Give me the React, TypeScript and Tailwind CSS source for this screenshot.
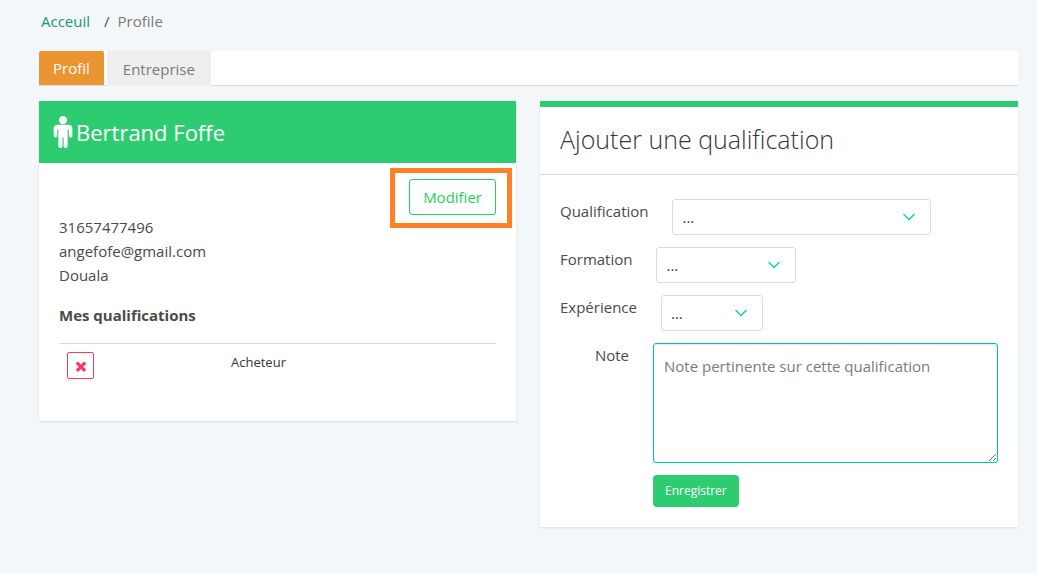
import React, { useState } from 'react';

interface SelectFieldProps {
  id: string;
  label: string;
  width: string;
}

const profile = {
  name: 'Bertrand Foffe',
  phone: '31657477496',
  email: 'angefofe@gmail.com',
  city: 'Douala',
  qualifications: ['Acheteur'],
};

const MaleIcon = () => (
  <svg className="h-8 w-5" viewBox="0 160 1024 1760" fill="currentColor" aria-hidden="true">
    <path d="M1024 832v416q0 40-28 68t-68 28-68-28-28-68v-352h-64v912q0 46-33 79t-79 33-79-33-33-79v-464h-64v464q0 46-33 79t-79 33-79-33-33-79v-912h-64v352q0 40-28 68t-68 28-68-28-28-68v-416q0-80 56-136t136-56h640q80 0 136 56t56 136zm-288-448q0 93-65.5 158.5t-158.5 65.5-158.5-65.5-65.5-158.5 65.5-158.5 158.5-65.5 158.5 65.5 65.5 158.5z" />
  </svg>
);

const CrossIcon = () => (
  <svg className="h-[10px] w-[10px]" viewBox="302 430 1188 1124" fill="currentColor" aria-hidden="true">
    <path d="M1490 1322q0 40-28 68l-136 136q-28 28-68 28t-68-28l-294-294-294 294q-28 28-68 28t-68-28l-136-136q-28-28-28-68t28-68l294-294-294-294q-28-28-28-68t28-68l136-136q28-28 68-28t68 28l294 294 294-294q28-28 68-28t68 28l136 136q28 28 28 68t-28 68l-294 294 294 294q28 28 28 68z" />
  </svg>
);

const SelectField: React.FC<SelectFieldProps> = ({ id, label, width }) => (
  <div className="flex">
    <label htmlFor={id} className="mr-6 flex-1 text-right">{label}</label>
    <div className="flex flex-[5]">
      <div className={`relative ${width}`}>
        <select
          id={id}
          className="block h-9 w-full appearance-none rounded-[3px] border border-[#dbdbdb] bg-white px-[9px] text-[#363636] focus:border-[#00d1b2] focus:outline-none"
        >
          <option>...</option>
        </select>
        <svg
          className="pointer-events-none absolute top-[14px] right-4 h-2 w-3"
          viewBox="0 0 12 8"
          fill="none"
          stroke="#00d1b2"
          strokeWidth="1.3"
        >
          <path d="M0.5 1L6 6.5L11.5 1" />
        </svg>
      </div>
    </div>
  </div>
);

const App: React.FC = () => {
  const [note, setNote] = useState('');

  return (
    <div className="min-h-screen bg-[#f4f7fa] pr-[19px] pb-10 pl-[39px] font-['Open_Sans','Noto_Sans',sans-serif] text-[15px] leading-6 text-[#4a4a4a]">
      <nav className="flex pt-[9px] pb-[18px]">
        <a href="#" className="pl-[2px] text-[#16967a]">Acceuil</a>
        <span className="mr-2 ml-[14px]">/</span>
        <span className="text-[#7a7a7a]">Profile</span>
      </nav>

      <div className="flex h-[35px] gap-[3px] border-b border-[#dbdbdb] bg-white">
        <button type="button" className="h-[34px] rounded-t-[2px] bg-[#eb9532] px-[14px] text-white">Profil</button>
        <button type="button" className="h-[35px] rounded-t-[2px] bg-[#eeeeee] px-4 text-[#7a7a7a]">Entreprise</button>
      </div>

      <div className="mt-[15px] grid grid-cols-[477fr_478fr] items-start gap-6">
        <section className="bg-white shadow-[0_1px_2px_rgba(10,10,10,0.1)]">
          <header className="flex h-[62px] items-center bg-[#2ecc71] px-[14px] text-white">
            <MaleIcon />
            <h1 className="ml-[3px] text-[22px]">{profile.name}</h1>
          </header>
          <div className="px-5 pt-4 pb-[38px]">
            <div className="relative ml-auto w-fit">
              <button type="button" className="block h-9 rounded-[3px] border border-[#23d160] px-[13px] text-[#23d160]">Modifier</button>
              <div className="pointer-events-none absolute -top-[11px] -right-4 -bottom-[13px] -left-[19px] border-5 border-[#ff8127]" />
            </div>
            <p>{profile.phone}</p>
            <p>{profile.email}</p>
            <p>{profile.city}</p>
            <h2 className="mt-4 font-bold">Mes qualifications</h2>
            <table className="mt-4 w-full table-fixed border-t border-[#dbdbdb] text-[13px] text-[#363636]">
              <tbody>
                {profile.qualifications.map(q => (
                  <tr key={q}>
                    <td className="w-[164px] px-2 pt-2 pb-1 align-top">
                      <button
                        type="button"
                        aria-label="Supprimer"
                        className="flex h-[27px] w-[27px] items-center justify-center rounded-[2px] border border-[#ff3860] pt-[2px] text-[#ff3860]"
                      >
                        <CrossIcon />
                      </button>
                    </td>
                    <td className="px-2 pt-2 align-top leading-5">{q}</td>
                  </tr>
                ))}
              </tbody>
            </table>
          </div>
        </section>

        <section className="border-t-6 border-[#2ecc71] bg-white shadow-[0_1px_2px_rgba(10,10,10,0.1)]">
          <header className="border-b border-[#d0dce7] px-5 pt-3 pb-[15px]">
            <h2 className="text-[25px] leading-10 font-light text-[#363636]">Ajouter une qualification</h2>
          </header>
          <form className="flex flex-col gap-3 px-5 pt-6 pb-5" onSubmit={e => e.preventDefault()}>
            <SelectField id="qualification" label="Qualification" width="w-[259px]" />
            <SelectField id="formation" label="Formation" width="w-[140px]" />
            <SelectField id="experience" label="Expérience" width="w-[102px]" />
            <div className="flex">
              <label htmlFor="note" className="mr-6 flex-1 text-right">Note</label>
              <div className="flex-[5]">
                <textarea
                  id="note"
                  value={note}
                  onChange={e => setNote(e.target.value)}
                  placeholder="Note pertinente sur cette qualification"
                  className="block h-[120px] w-full rounded-[3px] border border-[#00c4a7] px-[10px] py-[10px] shadow-[inset_0_1px_2px_rgba(10,10,10,0.1)] placeholder:text-[#7b7b7b] focus:outline-none"
                />
                <button type="submit" className="mt-3 block h-8 rounded-[4px] bg-[#2ecc71] px-3 text-[12px] text-white">Enregistrer</button>
              </div>
            </div>
          </form>
        </section>
      </div>
    </div>
  );
};

export default App;
